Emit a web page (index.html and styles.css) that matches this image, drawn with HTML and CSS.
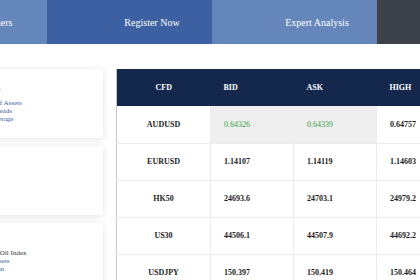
FILE: index.html
```html
<!doctype html>
<html>
<head>
    <title>Markets</title>

    <link rel="stylesheet" href="styles.css">
</head>
<body>
    <nav class="topnav">
      <a class="nav-item light" href="#">Our Partners</a>
      <a class="nav-item dark" href="#">Register Now</a>
      <a class="nav-item light" href="#">Expert Analysis</a>
      <a class="nav-item slate" href="#">Contact</a>
    </nav>

    <div class="market">
      <div class="side">
        <div class="card">
          <p class="card-title">Trade Forex.</p>
          <ul class="card-list">
            <li>Wide Range of Assets</li>
            <li>Attractive Spreads</li>
            <li>Dynamic Leverage</li>
          </ul>
        </div>

        <div class="card"></div>

        <div class="card">
          <ul class="card-list lower">
            <li class="strong">Crude Oil Index</li>
            <li>All Assets</li>
            <li>Position</li>
          </ul>
        </div>
      </div>

      <table class="quotes">
        <colgroup>
          <col class="c-name">
          <col class="c-num">
          <col class="c-num">
          <col class="c-num">
          <col class="c-num">
        </colgroup>
        <thead>
          <tr>
            <th class="name">CFD</th>
            <th>BID</th>
            <th>ASK</th>
            <th>HIGH</th>
            <th>LOW</th>
          </tr>
        </thead>
        <tbody>
          <tr>
            <td class="name">AUDUSD</td>
            <td class="live up">0.64326</td>
            <td class="live up">0.64339</td>
            <td>0.64757</td>
            <td>0.64210</td>
          </tr>
          <tr>
            <td class="name">EURUSD</td>
            <td>1.14107</td>
            <td>1.14119</td>
            <td>1.14603</td>
            <td>1.13950</td>
          </tr>
          <tr>
            <td class="name">HK50</td>
            <td>24693.6</td>
            <td>24703.1</td>
            <td>24979.2</td>
            <td>24580.4</td>
          </tr>
          <tr>
            <td class="name">US30</td>
            <td>44506.1</td>
            <td>44507.9</td>
            <td>44692.2</td>
            <td>44310.7</td>
          </tr>
          <tr>
            <td class="name">USDJPY</td>
            <td>150.397</td>
            <td>150.419</td>
            <td>150.464</td>
            <td>149.880</td>
          </tr>
        </tbody>
      </table>
    </div>
</body>
</html>
```

FILE: styles.css
```css
* {
  margin: 0;
  padding: 0;
  box-sizing: border-box;
}
body {
  background-color: #fff;
  font-family: "Liberation Serif", "Times New Roman", serif;
  overflow: hidden;
}
.topnav {
  display: flex;
  height: 44px;
  margin-left: -118px;
}
.nav-item {
  flex: none;
  width: 165px;
  display: flex;
  align-items: center;
  justify-content: center;
  padding-left: 45px;
  color: #fff;
  font-size: 10px;
  text-decoration: none;
}
.nav-item.light {
  background-color: #6586ba;
}
.nav-item.dark {
  background-color: #3c60a1;
}
.nav-item.slate {
  background-color: #3c414a;
}
.market {
  display: flex;
  align-items: flex-start;
  gap: 13px;
  padding-top: 25px;
  margin-left: -60px;
}
.side {
  flex: none;
  width: 163px;
  display: flex;
  flex-direction: column;
  gap: 8px;
}
.card {
  height: 69px;
  background-color: #fff;
  border-radius: 2px;
  box-shadow: 0 1px 6px rgba(0, 0, 0, 0.12);
  padding: 14px 0 0 20px;
}
.card-title {
  font-size: 8px;
  line-height: 9px;
  color: #333;
  margin-bottom: 4px;
}
.card-list {
  list-style: none;
  font-size: 7px;
  line-height: 8px;
  color: #3c60a1;
  padding-top: 3px;
}
.card-list.lower {
  padding-top: 12px;
  padding-left: 21px;
}
.card-list .strong {
  color: #333;
}
.quotes {
  flex: none;
  border-collapse: collapse;
  table-layout: fixed;
  border-left: 1px solid #c8c8c8;
  font-size: 8px;
}
.c-name {
  width: 94px;
}
.c-num {
  width: 83px;
}
.quotes th {
  height: 37px;
  background-color: #14284e;
  color: #fff;
  font-weight: bold;
  text-align: left;
  padding-left: 13px;
}
.quotes td {
  height: 37px;
  color: #1e1e1e;
  font-weight: bold;
  text-align: left;
  padding-left: 13px;
  border-bottom: 1px solid #ececec;
  border-right: 1px solid #ececec;
}
.quotes .name {
  text-align: center;
  padding-left: 0;
}
.quotes td.live {
  background-color: #efefef;
}
.quotes td.up {
  color: #2f9e3f;
  font-weight: normal;
}
```
